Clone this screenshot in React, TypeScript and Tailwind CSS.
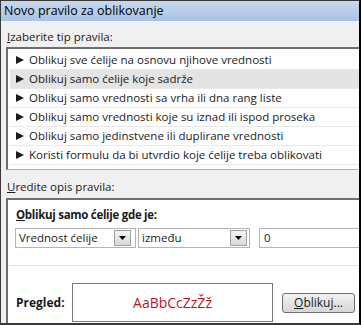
import React from "react";

const rows = [
  "Oblikuj sve ćelije na osnovu njihove vrednosti",
  "Oblikuj samo ćelije koje sadrže",
  "Oblikuj samo vrednosti sa vrha ili dna rang liste",
  "Oblikuj samo vrednosti koje su iznad ili ispod proseka",
  "Oblikuj samo jedinstvene ili duplirane vrednosti",
  "Koristi formulu da bi utvrdio koje ćelije treba oblikovati",
];

function Arrow() {
  return (
    <svg width="8" height="8" viewBox="0 0 8 8" className="shrink-0">
      <path d="M0 0 L8 4 L0 8 Z" fill="#1a1a1a" />
    </svg>
  );
}

function DropBtn() {
  return (
    <div className="w-[17px] h-[16px] border border-[#a0a0a0] bg-gradient-to-b from-[#f4f4f4] to-[#d8d8d8] flex items-center justify-center">
      <svg width="7" height="4" viewBox="0 0 7 4">
        <path d="M0 0 L7 0 L3.5 4 Z" fill="#000" />
      </svg>
    </div>
  );
}

export default function App() {
  return (
    <div className="w-[361px] h-[325px] bg-[#f0f0f0] border-l border-t border-b-2 border-[#3a3a3a] border-r-2 border-r-black flex flex-col text-[11.5px] text-[#1a1a1a] overflow-hidden font-['Open_Sans','Noto_Sans',sans-serif]">
      <div className="h-[20px] shrink-0 bg-gradient-to-b from-[#c7d8ee] to-[#a9c3e4] flex items-center pl-[3px] text-[12.5px] text-black">
        Novo pravilo za oblikovanje
      </div>
      <div className="flex flex-col pl-[5px]">
        <div className="h-[26px] flex items-end pb-[2px] pl-[1px]">
          <span>
            <span className="underline">I</span>zaberite tip pravila:
          </span>
        </div>
        <div className="h-[123px] bg-white border-t-2 border-l-2 border-[#6e6e6e] border-b border-b-[#b0b0b0] pt-[2px] pl-[2px]">
          {rows.map((r, i) => (
            <div
              key={i}
              className={
                "h-[19px] flex items-center gap-[5px] pl-[6px] border-b border-[#e8e8e8] " +
                (i === 1 ? "bg-[#e4e4e4]" : "")
              }
            >
              <Arrow />
              <span>{r}</span>
            </div>
          ))}
        </div>
        <div className="h-[28px] flex items-end pb-[3px] pl-[1px]">
          <span>
            <span className="underline">U</span>redite opis pravila:
          </span>
        </div>
        <div className="h-[125px] bg-white border-t-2 border-l-2 border-[#6e6e6e] flex flex-col">
          <div className="pl-[8px] pt-[6px] h-[28px] font-bold text-[11.5px] tracking-[-0.3px]">
            <span className="underline">O</span>blikuj samo ćelije gde je:
          </div>
          <div className="flex items-center pl-[7px] h-[20px]">
            <div className="w-[121px] h-[20px] border border-[#b4b4b4] flex items-center justify-between pl-[3px] pr-[4px]">
              <span>Vrednost ćelije</span>
              <DropBtn />
            </div>
            <div className="w-[112px] h-[20px] ml-[2px] border border-[#b4b4b4] flex items-center justify-between pl-[3px] pr-[2px]">
              <span>između</span>
              <DropBtn />
            </div>
            <div className="flex-1 h-[20px] ml-[9px] border border-[#b4b4b4] border-r-0 flex items-center pl-[4px]">
              0
            </div>
          </div>
          <div className="mt-[17px] ml-[1px] border-t border-[#e2e2e2]" />
          <div className="flex items-center mt-[17px]">
            <div className="w-[64px] pl-[8px] font-bold text-[12px]">Pregled:</div>
            <div className="w-[201px] h-[39px] border border-[#7a7a7a] flex items-center justify-center text-[#b3161b] text-[14px]">
              AaBbCcZzŽž
            </div>
            <div className="ml-[9px] w-[73px] h-[20px] rounded-[3px] border border-[#707070] bg-gradient-to-b from-[#f2f2f2] to-[#d6d6d6] flex items-center justify-center text-[12px]">
              <span>
                <span className="underline">O</span>blikuj...
              </span>
            </div>
          </div>
        </div>
      </div>
    </div>
  );
}
